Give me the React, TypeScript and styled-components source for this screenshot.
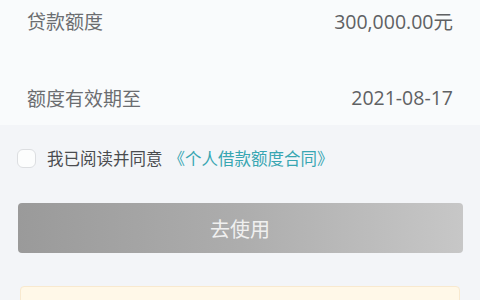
import styled, { createGlobalStyle } from 'styled-components';

const Global = createGlobalStyle`
  body {
    margin: 0;
    background: #f3f5f8;
    font-family: "Noto Sans CJK SC", "Noto Sans", sans-serif;
  }
`;

const Page = styled.div`
  width: 480px;
  height: 300px;
  overflow: hidden;
  background: #f3f5f8;
`;

const InfoCard = styled.div`
  background: #f9fbfc;
  padding: 0 27px;
  height: 125px;
  display: flex;
  flex-direction: column;
`;

const InfoRow = styled.div<{ $top: number }>`
  display: flex;
  justify-content: space-between;
  align-items: center;
  margin-top: ${p => p.$top}px;
  height: 26px;
  font-size: 19px;
  color: #6b6d70;
`;

const Value = styled.span`
  font-family: "Open Sans", "Noto Sans CJK SC", sans-serif;
  font-size: 19.5px;
  color: #5f6163;
`;

const Agree = styled.label`
  display: flex;
  align-items: center;
  padding: 0 17px;
  margin-top: 22px;
  height: 22px;
  font-size: 16.5px;
  color: #4a4c4f;
`;

const Check = styled.span`
  width: 17px;
  height: 17px;
  border: 1.5px solid #dcdee1;
  border-radius: 6px;
  background: #fcfdfd;
  margin-right: 11px;
`;

const Contract = styled.span`
  color: #38a6b2;
  margin-left: 6px;
`;

const UseButton = styled.button`
  display: block;
  margin: 34px auto 0;
  width: 445px;
  height: 50px;
  border: none;
  border-radius: 4px;
  background: linear-gradient(90deg, #9a9a9a 0%, #adadad 50%, #c7c7c7 100%);
  color: #f0f0f0;
  font-family: "Noto Sans CJK SC", sans-serif;
  font-size: 20px;
`;

const Notice = styled.div`
  margin: 33px 20px 0;
  height: 40px;
  background: #fff8e8;
  border: 1px solid #f8e9cf;
  border-radius: 4px;
`;

export default function App() {
  return (
    <Page>
      <Global />
      <InfoCard>
        <InfoRow $top={7}>
          <span>贷款额度</span>
          <Value>300,000.00元</Value>
        </InfoRow>
        <InfoRow $top={51}>
          <span>额度有效期至</span>
          <Value>2021-08-17</Value>
        </InfoRow>
      </InfoCard>
      <Agree>
        <Check />
        我已阅读并同意
        <Contract>《个人借款额度合同》</Contract>
      </Agree>
      <UseButton>去使用</UseButton>
      <Notice />
    </Page>
  );
}
